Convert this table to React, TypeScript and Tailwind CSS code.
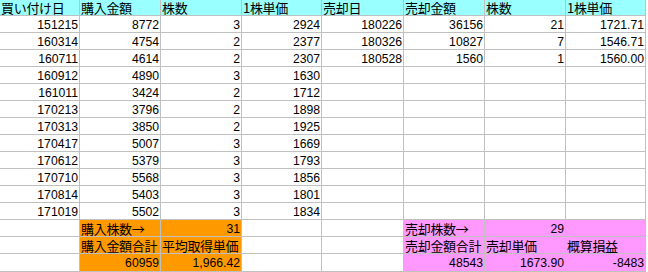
import React from "react";

type Fill = "none" | "head" | "orange" | "pink";

const widths = [80, 81, 81, 80, 82, 81, 81, 80];

const head = ["買い付け日", "購入金額", "株数", "1株単価", "売却日", "売却金額", "株数", "1株単価"];

const buys = [
  ["151215", "8772", "3", "2924"],
  ["160314", "4754", "2", "2377"],
  ["160711", "4614", "2", "2307"],
  ["160912", "4890", "3", "1630"],
  ["161011", "3424", "2", "1712"],
  ["170213", "3796", "2", "1898"],
  ["170313", "3850", "2", "1925"],
  ["170417", "5007", "3", "1669"],
  ["170612", "5379", "3", "1793"],
  ["170710", "5568", "3", "1856"],
  ["170814", "5403", "3", "1801"],
  ["171019", "5502", "3", "1834"],
];

const sells = [
  ["180226", "36156", "21", "1721.71"],
  ["180326", "10827", "7", "1546.71"],
  ["180528", "1560", "1", "1560.00"],
];

const isNum = (s: string) => /^[-\d.,]+$/.test(s);

const Cell = ({ text, fill, w, h }: { text: string; fill: Fill; w: number; h: number }) => {
  const num = isNum(text);
  const bg =
    fill === "head"
      ? "bg-[#99ffff]"
      : fill === "orange"
      ? "bg-[#ff9900]"
      : fill === "pink"
      ? "bg-[#ff99ff]"
      : "bg-white";
  return (
    <div
      className={`${bg} flex items-center overflow-visible whitespace-nowrap border-r border-b border-[#c0c0c0] text-black ${
        num
          ? "justify-end pr-[1px] font-['Liberation_Sans',sans-serif] text-[12.2px] pt-[2px]"
          : "justify-start pl-[1px] font-['Noto_Sans_CJK_JP',sans-serif] text-[13px] tracking-[-0.3px]"
      } leading-[15px]`}
      style={{ width: w, height: h }}
    >
      {text}
    </div>
  );
};

export default function App() {
  const rows: { cells: string[]; fills: Fill[] }[] = [];
  rows.push({ cells: head, fills: Array(8).fill("head") });
  for (let i = 0; i < 12; i++) {
    const s = sells[i] || ["", "", "", ""];
    rows.push({ cells: [...buys[i], ...s], fills: Array(8).fill("none") });
  }
  const n: Fill = "none";
  const o: Fill = "orange";
  const p: Fill = "pink";
  rows.push({
    cells: ["", "購入株数→", "31", "", "", "売却株数→", "29", ""],
    fills: [n, o, o, n, n, p, p, p],
  });
  rows.push({
    cells: ["", "購入金額合計", "平均取得単価", "", "", "売却金額合計", "売却単価", "概算損益"],
    fills: [n, o, o, n, n, p, p, p],
  });
  rows.push({
    cells: ["", "60959", "1,966.42", "", "", "48543", "1673.90", "-8483"],
    fills: [n, o, o, n, n, p, p, p],
  });

  return (
    <div className="w-[648px] h-[272px] overflow-hidden bg-white">
      {rows.map((r, ri) => (
        <div key={ri} className="flex">
          {r.cells.map((c, ci) => (
            <Cell key={ci} text={c} fill={r.fills[ci]} w={widths[ci]} h={ri === 0 ? 16 : ri === 15 ? 18 : 17} />
          ))}
        </div>
      ))}
    </div>
  );
}
